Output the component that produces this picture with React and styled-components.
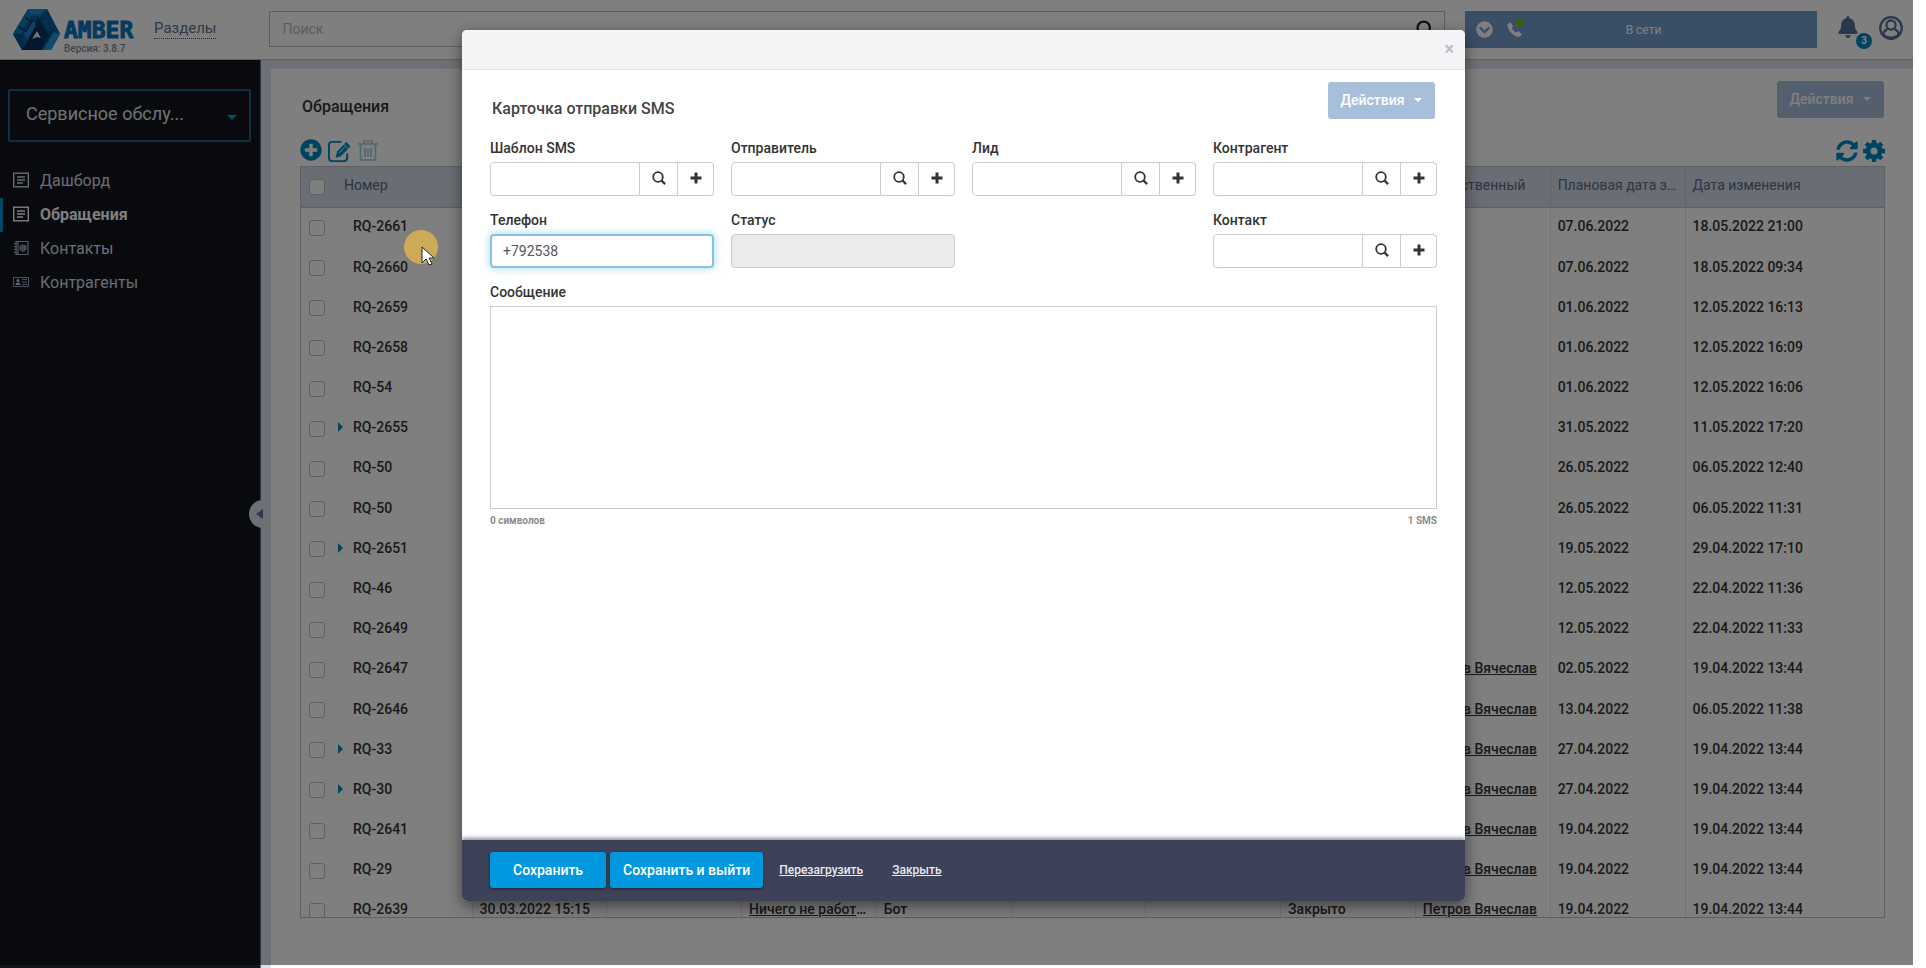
import React from 'react';
import styled, { createGlobalStyle, css } from 'styled-components';
import { FaBell, FaChevronCircleDown, FaPlusCircle, FaSyncAlt } from 'react-icons/fa';

const GlobalStyle = createGlobalStyle`
    * {
        box-sizing: border-box;
    }

    body {
        margin: 0;
        background: #fff;
        font-family: Roboto, "Noto Sans", sans-serif;
        font-size: 14px;
        line-height: 20px;
        color: #333;
    }

    button, input, textarea, select {
        font: inherit;
        color: inherit;
    }

    button {
        cursor: pointer;
    }
`;

const Page = styled.div`
    position: relative;
    display: flex;
    flex-direction: column;
    height: 100vh;
    overflow: hidden;
    padding-right: 13px;
`;

/* ---------- header ---------- */

const Header = styled.header`
    flex: none;
    display: flex;
    align-items: flex-start;
    height: 60px;
    padding: 11px 10px 0 13px;
    border-bottom: 1px solid #c3c5c9;
`;

const Brand = styled.div`
    display: flex;
    width: 141px;
    margin-top: -2px;

    svg {
        width: 47px;
        height: 41px;
    }
`;

const BrandText = styled.div`
    display: flex;
    flex-direction: column;
    padding: 12px 0 0 4px;

    strong {
        font-family: "DejaVu Sans Mono", monospace;
        font-size: 23px;
        line-height: 18px;
        color: #0b74bd;
        -webkit-text-stroke: 1px #0b74bd;
    }

    small {
        margin-top: 4px;
        font-size: 10px;
        font-weight: 500;
        line-height: 12px;
        color: #7c8798;
    }
`;

const SectionsLink = styled.a`
    margin: 7px 53px 0 0;
    border-bottom: 1px dotted #43618a;
    font-size: 15px;
    line-height: 20px;
    color: #5d7396;
    text-decoration: none;
`;

const SearchBox = styled.label`
    flex: 1;
    display: flex;
    align-items: center;
    height: 36px;
    padding: 0 10px 0 12px;
    border: 1px solid #b4bccb;

    input {
        flex: 1;
        padding: 0;
        border: 0;
        outline: 0;
        background: none;

        &::placeholder {
            color: #b5b8bd;
            opacity: 1;
        }
    }

    svg {
        width: 18px;
        height: 18px;
        color: #222;
    }
`;

const PhoneBar = styled.div`
    display: flex;
    align-items: center;
    width: 352px;
    height: 37px;
    margin: 0 20px;
    padding: 0 11px;
    background: #749dcb;
    color: #fff;

    svg {
        width: 17px;
        height: 17px;
    }

    span {
        flex: 1;
        padding-right: 42px;
        font-size: 12px;
        text-align: center;
    }
`;

const PhoneState = styled.div`
    position: relative;
    display: flex;
    margin-left: 13px;

    &::after {
        content: '';
        position: absolute;
        top: -2px;
        right: -1px;
        width: 8px;
        height: 7px;
        border-radius: 2px;
        background: #6fc800;
    }
`;

const IconButton = styled.button`
    position: relative;
    display: flex;
    padding: 0;
    border: 0;
    background: none;
    color: ${({ $color }) => $color || '#0086c0'};
    opacity: ${({ $faded }) => ($faded ? 0.4 : 1)};

    svg {
        width: ${({ $size }) => $size || 22}px;
        height: ${({ $size }) => $size || 22}px;
    }
`;

const UserTools = styled.div`
    display: flex;
    gap: 20px;
    padding: 5px 0 0;
`;

const Badge = styled.span`
    position: absolute;
    top: 17px;
    left: 19px;
    width: 16px;
    height: 16px;
    border-radius: 50%;
    background: #0086c0;
    font-size: 10px;
    font-weight: 700;
    line-height: 16px;
    color: #fff;
    text-align: center;
`;

/* ---------- sidebar ---------- */

const Columns = styled.div`
    flex: 1;
    display: flex;
    min-height: 0;
`;

const Sidebar = styled.aside`
    position: relative;
    flex: none;
    width: 261px;
    padding-top: 29px;
    border-right: 1px solid #4a7396;
    background: #11141c;
`;

const Workspace = styled.button`
    display: flex;
    align-items: center;
    justify-content: space-between;
    width: 243px;
    height: 53px;
    margin: 0 0 22px 8px;
    padding: 0 12px 4px 16px;
    border: 2px solid #1e5f88;
    border-radius: 2px;
    background: none;
    font-size: 18px;
    color: #e0e3e8;

    svg {
        width: 10px;
        height: 5px;
        margin-top: 7px;
        color: #209cc8;
    }
`;

const NavItem = styled.a`
    display: flex;
    align-items: center;
    gap: 11px;
    height: 34px;
    padding-left: 10px;
    border-left: 3px solid transparent;
    font-size: 16px;
    color: #d5dae2;
    text-decoration: none;

    ${({ $active }) =>
        $active &&
        css`
            border-color: #0093d5;
            font-weight: 700;
            color: #fff;
        `}

    svg {
        width: 16px;
        height: 16px;
        margin-bottom: 2px;
    }
`;

const Collapse = styled.button`
    position: absolute;
    top: 440px;
    right: -3px;
    display: flex;
    align-items: center;
    justify-content: flex-end;
    width: 14px;
    height: 28px;
    padding: 0;
    border: 0;
    border-radius: 14px 0 0 14px;
    background: #d8dfea;

    svg {
        width: 7px;
        height: 10px;
    }
`;

/* ---------- list ---------- */

const Main = styled.main`
    flex: 1;
    min-width: 0;
    padding: 9px 0 0 10px;
    background: #dbe1eb;
`;

const Card = styled.section`
    height: 100%;
    padding: 12px 28px 0 29px;
    background: #fff;
`;

const CardTop = styled.div`
    display: flex;
    align-items: flex-start;
    justify-content: space-between;
    padding: 0 1px 0 2px;

    h1 {
        margin: 16px 0 0;
        font-size: 16px;
        font-weight: 500;
        line-height: 20px;
        color: #333;
    }
`;

const ActionButton = styled.button`
    display: flex;
    align-items: center;
    justify-content: center;
    gap: 10px;
    width: 107px;
    height: 37px;
    padding: 0 0 2px;
    border: 0;
    border-radius: 3px;
    background: #a7bfda;
    font-weight: 500;
    color: #fff;

    svg {
        width: 8px;
        height: 4px;
    }
`;

const Toolbar = styled.div`
    display: flex;
    align-items: center;
    justify-content: space-between;
    height: 48px;
    padding-top: 18px;

    div {
        display: flex;
        gap: 5px;
    }
`;

const TableFrame = styled.div`
    height: 752px;
    overflow: hidden;
    border: 1px solid #b9c2d0;
`;

const Table = styled.table`
    width: 100%;
    height: 764px;
    border-collapse: collapse;
    table-layout: fixed;

    th, td {
        padding: 0 7px 3px;
        overflow: hidden;
        border-right: 1px solid #e4e6ea;
        text-align: left;
        text-overflow: ellipsis;
        white-space: nowrap;
    }

    tr > :nth-child(1) {
        width: 36px;
        padding: 0 0 0 8px;
        border-right: 0;
    }

    tr > :nth-child(2) {
        width: 135px;
    }

    tr > :last-child {
        width: 199px;
        border-right: 0;
    }

    th {
        height: 40px;
        border-right-color: #bfc9d8;
        border-bottom: 1px solid #b5c0d0;
        background: #d4dce8;
        font-weight: 400;
        color: #566a8b;
    }

    td {
        font-weight: 500;
        color: #333;
    }

    td:nth-child(2) {
        padding-left: 1px;
    }

    a {
        color: inherit;
    }
`;

const Tick = styled.input`
    appearance: none;
    display: block;
    width: 16px;
    height: 16px;
    margin: 0;
    border: 1px solid #c0c0c0;
    border-radius: 3px;
    background: #fff;
`;

const Number = styled.span`
    display: flex;
    align-items: center;
    gap: 10px;

    svg {
        flex: none;
        width: 5px;
        height: 10px;
    }
`;

/* ---------- modal ---------- */

const Overlay = styled.div`
    position: absolute;
    inset: 0 13px 3px 0;
    padding: 30px 448px 0 462px;
    background: rgba(0, 0, 0, 0.5);
`;

const Modal = styled.div`
    display: flex;
    flex-direction: column;
    height: 871px;
    overflow: hidden;
    border-radius: 5px;
    background: #fff;
    box-shadow: 0 5px 15px rgba(0, 0, 0, 0.5);
`;

const ModalHeader = styled.div`
    flex: none;
    display: flex;
    align-items: center;
    justify-content: flex-end;
    height: 40px;
    padding: 0 11px 2px;
    border-bottom: 1px solid #e3e5e8;
    background: #f3f4f6;

    button {
        padding: 0;
        border: 0;
        background: none;
        font-size: 18px;
        font-weight: 700;
        color: #bfc0c2;
    }
`;

const Form = styled.form`
    flex: 1;
    padding: 12px 28px 0;
`;

const FormTop = styled.div`
    display: flex;
    align-items: flex-start;
    justify-content: space-between;
    padding: 0 2px;

    h2 {
        margin: 17px 0 0;
        font-size: 16px;
        font-weight: 500;
        line-height: 20px;
        color: #444;
    }
`;

const Fields = styled.div`
    display: grid;
    grid-template-columns: repeat(4, 1fr);
    gap: 14px 17px;
    margin-top: 19px;
`;

const Field = styled.div`
    grid-column: ${({ $column }) => $column || 'auto'};

    label {
        display: block;
        margin-bottom: 4px;
        font-weight: 500;
        line-height: 20px;
        color: #333;
    }
`;

const TextInput = styled.input`
    display: block;
    width: 100%;
    min-width: 0;
    height: 34px;
    padding: 0 12px;
    border: 1px solid #ccc;
    border-radius: 4px;
    outline: 0;
    background: #fff;
    color: #555;

    &:disabled {
        background: #ebebeb;
    }

    ${({ $active }) =>
        $active &&
        css`
            padding: 0 11px;
            border: 2px solid #85c3da;
            box-shadow: 0 0 8px rgba(90, 190, 235, 0.6);
        `}
`;

const InputGroup = styled.div`
    display: flex;

    ${TextInput} {
        flex: 1;
        border-radius: 4px 0 0 4px;
    }
`;

const GroupButton = styled.button`
    display: flex;
    align-items: center;
    justify-content: center;
    width: ${({ $width }) => $width}px;
    height: 34px;
    padding: 0 0 2px;
    border: 1px solid #ccc;
    border-left: 0;
    background: #fff;
    color: #333;

    &:last-child {
        border-radius: 0 4px 4px 0;
    }

    svg {
        width: 14px;
        height: 14px;
    }
`;

const Message = styled.textarea`
    display: block;
    width: 100%;
    height: 203px;
    padding: 6px 12px;
    border: 1px solid #ccc;
    outline: 0;
    resize: none;
`;

const Counter = styled.div`
    display: flex;
    justify-content: space-between;
    margin-top: 5px;
    font-size: 10px;
    font-weight: 700;
    line-height: 14px;
    color: #8c8c8c;
`;

const ModalFooter = styled.div`
    z-index: 1;
    flex: none;
    display: flex;
    align-items: center;
    height: 61px;
    padding: 0 28px 2px;
    background: #3e4259;
    box-shadow: 0 -2px 4px rgba(62, 66, 89, 0.6);

    a {
        margin-left: 16px;
        font-size: 12px;
        font-weight: 500;
        color: #e9eaf0;
    }

    a + a {
        margin-left: 29px;
    }
`;

const SaveButton = styled.button`
    height: 36px;
    margin-right: 4px;
    padding: 0 ${({ $wide }) => ($wide ? 23 : 13)}px;
    border: 0;
    border-radius: 3px;
    background: #0099df;
    box-shadow: 0 1px 3px rgba(0, 0, 0, 0.5);
    font-weight: 500;
    color: #fff;

    & + & {
        margin-right: 0;
    }
`;

/* ---------- pointer ---------- */

const Pointer = styled.svg`
    position: absolute;
    top: 229px;
    left: 403px;
    width: 36px;
    height: 40px;
`;

/* ---------- icons ---------- */

const Logo = () => (
    <svg viewBox="0 0 47 41">
        <path d="M15 0h19l13 25-9 16H9L0 25z" fill="#0c5e9f" />
        <path d="M15 0h19l-2 6-14 1L6 28l-6-3z" fill="#1579b8" />
        <path d="M15 0h19l-2 5H17z" fill="#1b8fd2" />
        <path d="M34 0l13 25-6 2L28 5z" fill="#0e5a97" />
        <path d="M47 25l-9 16h-8l11-18z" fill="#1f96dc" />
        <path d="M0 25l6 2 9 14H9z" fill="#0b5290" />
        <path d="M9 41l6-9h18l-5 9z" fill="#0a2f5c" />
        <path d="M18 12h5v7l-8 13-4-7z" fill="#1b86c8" />
        <path d="M25 8l12 20-5 3-10-16z" fill="#0a3461" />
        <path d="M23 16l9 16H14z" fill="#0a2c54" />
        <path d="M24 22l4 7-4-1-5 2z" fill="#d6ebfa" />
        <path
            d="M12 8l5 4h9M6 18l7 4 6-9M3 25l7 3M20 36l7-5h8M31 10l-5 1M38 22l-7 11"
            fill="none"
            stroke="#083c6c"
            strokeWidth="1.5"
        />
    </svg>
);

const Caret = () => (
    <svg viewBox="0 0 10 5"><path d="M0 0h10L5 5z" fill="currentColor" /></svg>
);

const SearchIcon = () => (
    <svg viewBox="0 0 14 14" fill="none" stroke="currentColor">
        <circle cx="6" cy="6" r="4.8" strokeWidth="1.8" />
        <path d="M9.5 9.5l3.6 3.6" strokeWidth="2.2" />
    </svg>
);

const PlusIcon = () => (
    <svg viewBox="0 0 14 14"><path d="M7 1.5v11M1.5 7h11" stroke="currentColor" strokeWidth="3" /></svg>
);

const HandsetIcon = () => (
    <svg viewBox="0 0 17 17">
        <path
            d="M4.5 1.5L1.5 3c-.8 5.5 6 13 11.500 13l3-2.500-3.500-3.500-2.500 1.500c-2-1-3.500-2.700-4.200-4.700L7 5z"
            fill="currentColor"
        />
    </svg>
);

const UserIcon = () => (
    <svg viewBox="0 0 24 24" fill="none" stroke="currentColor">
        <circle cx="12" cy="12" r="10.8" strokeWidth="2.2" />
        <circle cx="12" cy="9" r="4.6" strokeWidth="2.2" />
        <path d="M8.5 13c-1.500 1.500-4 1-4.300 5.500M15.500 13c1.500 1.500 4 1 4.300 5.500M4 18c4 5 12 5 16 0" strokeWidth="2.4" />
    </svg>
);

const EditIcon = () => (
    <svg viewBox="0 0 26 26" fill="none" stroke="currentColor">
        <path d="M15 3H5.500Q2 3 2 6.500v13Q2 23 5.500 23h12q3.500 0 3.500-3.500V15" strokeWidth="2" />
        <path d="M20 3l4.500 4.500L14.500 18 9 19.500 10.500 13z" fill="currentColor" stroke="none" />
        <path d="M17.500 5.500l4.500 4.500" stroke="#fff" />
        <path d="M12.500 14.500l6-6" stroke="#fff" />
    </svg>
);

const TrashIcon = () => (
    <svg viewBox="0 0 22 22" fill="none" stroke="currentColor" strokeWidth="1.6">
        <path d="M1 5h20M7 5V2h8v3M3.500 5v16h15V5M8 9v9M11 9v9M14 9v9" />
    </svg>
);

const CogIcon = () => (
    <svg viewBox="0 0 22 22" stroke="currentColor" fill="none">
        <circle cx="11" cy="11" r="6" strokeWidth="5" />
        <path d="M11 0v4M11 18v4M0 11h4M18 11h4M3.200 3.200l3 3M15.800 15.800l3 3M18.800 3.200l-3 3M6.200 15.800l-3 3" strokeWidth="4.4" />
    </svg>
);

const ListIcon = () => (
    <svg viewBox="0 0 16 16" fill="none" stroke="currentColor" strokeWidth="1.4">
        <rect x="0.7" y="1.2" width="14.6" height="13.6" />
        <path d="M4 5h8M4 8h8M4 11h6" />
    </svg>
);

const BookIcon = () => (
    <svg viewBox="0 0 16 16" fill="none" stroke="#a7b2c7" strokeWidth="1.2">
        <path d="M3 1.5h12v13H3z M1 3.5h3M1 6.5h3M1 9.5h3M1 12.5h3M5 2v12" />
        <circle cx="10" cy="8" r="1.3" />
        <path d="M11.4 6.5v2.600c1 .6 1.800-.3 1.700-1.500-.3-3.500-5.800-3.500-6 .3 0 3 3 3.800 5 2.600" />
    </svg>
);

const CardIcon = () => (
    <svg viewBox="0 0 16 16">
        <path d="M.5 3.500h15v9H.5z" fill="none" stroke="#97a3ba" />
        <circle cx="5" cy="6.5" r="1.5" fill="#c2cbdb" />
        <path d="M2.500 11c0-3.500 5-3.500 5 0z" fill="#c2cbdb" />
        <path d="M9 5.500h5M9 8h5M9 10.500h5" stroke="#97a3ba" />
    </svg>
);

const nav = [
    { name: 'Дашборд', Icon: ListIcon },
    { name: 'Обращения', Icon: ListIcon, active: true },
    { name: 'Контакты', Icon: BookIcon },
    { name: 'Контрагенты', Icon: CardIcon },
];

const headings = ['Номер', '', '', '', '', '', '', '', 'Ответственный', 'Плановая дата завершения', 'Дата изменения'];

const owner = 'Петров Вячеслав';

const rows = [
    { id: 'RQ-2661', due: '07.06.2022', changed: '18.05.2022 21:00' },
    { id: 'RQ-2660', due: '07.06.2022', changed: '18.05.2022 09:34' },
    { id: 'RQ-2659', due: '01.06.2022', changed: '12.05.2022 16:13' },
    { id: 'RQ-2658', due: '01.06.2022', changed: '12.05.2022 16:09' },
    { id: 'RQ-54', due: '01.06.2022', changed: '12.05.2022 16:06' },
    { id: 'RQ-2655', due: '31.05.2022', changed: '11.05.2022 17:20', nested: true },
    { id: 'RQ-50', due: '26.05.2022', changed: '06.05.2022 12:40' },
    { id: 'RQ-50', due: '26.05.2022', changed: '06.05.2022 11:31' },
    { id: 'RQ-2651', due: '19.05.2022', changed: '29.04.2022 17:10', nested: true },
    { id: 'RQ-46', due: '12.05.2022', changed: '22.04.2022 11:36' },
    { id: 'RQ-2649', due: '12.05.2022', changed: '22.04.2022 11:33' },
    { id: 'RQ-2647', owner, due: '02.05.2022', changed: '19.04.2022 13:44' },
    { id: 'RQ-2646', owner, due: '13.04.2022', changed: '06.05.2022 11:38' },
    { id: 'RQ-33', owner, due: '27.04.2022', changed: '19.04.2022 13:44', nested: true },
    { id: 'RQ-30', owner, due: '27.04.2022', changed: '19.04.2022 13:44', nested: true },
    { id: 'RQ-2641', owner, due: '19.04.2022', changed: '19.04.2022 13:44' },
    { id: 'RQ-29', owner, due: '19.04.2022', changed: '19.04.2022 13:44' },
    {
        id: 'RQ-2639',
        created: '30.03.2022 15:15',
        subject: 'Ничего не работает',
        source: 'Бот',
        status: 'Закрыто',
        owner,
        due: '19.04.2022',
        changed: '19.04.2022 13:44',
    },
];

const Actions = () => (
    <ActionButton type="button">
        Действия
        <Caret />
    </ActionButton>
);

const Lookup = ({ id, label, column }) => (
    <Field $column={column}>
        <label htmlFor={id}>{label}</label>
        <InputGroup>
            <TextInput id={id} />
            <GroupButton type="button" $width={38} aria-label="Найти"><SearchIcon /></GroupButton>
            <GroupButton type="button" $width={36} aria-label="Добавить"><PlusIcon /></GroupButton>
        </InputGroup>
    </Field>
);

const TopBar = () => (
    <Header>
        <Brand>
            <Logo />
            <BrandText>
                <strong>AMBER</strong>
                <small>Версия: 3.8.7</small>
            </BrandText>
        </Brand>
        <SectionsLink href="#sections">Разделы</SectionsLink>
        <SearchBox>
            <input type="text" placeholder="Поиск" aria-label="Поиск" />
            <SearchIcon />
        </SearchBox>
        <PhoneBar>
            <FaChevronCircleDown />
            <PhoneState><HandsetIcon /></PhoneState>
            <span>В сети</span>
        </PhoneBar>
        <UserTools>
            <IconButton $color="#566f95" aria-label="Уведомления">
                <FaBell />
                <Badge>3</Badge>
            </IconButton>
            <IconButton $color="#566f95" $size={24} aria-label="Профиль"><UserIcon /></IconButton>
        </UserTools>
    </Header>
);

const SideMenu = () => (
    <Sidebar>
        <Workspace>
            Сервисное обслу...
            <Caret />
        </Workspace>
        <nav>
            {nav.map(({ name, Icon, active }) => (
                <NavItem key={name} href="#list" $active={active}>
                    <Icon />
                    {name}
                </NavItem>
            ))}
        </nav>
        <Collapse aria-label="Свернуть меню">
            <svg viewBox="0 0 7 10"><path d="M7 0v10L0 5z" fill="#5a6f9c" /></svg>
        </Collapse>
    </Sidebar>
);

const RequestTable = () => (
    <TableFrame>
        <Table>
            <thead>
                <tr>
                    <th><Tick type="checkbox" aria-label="Выбрать все" /></th>
                    {headings.map((name, i) => <th key={i}>{name}</th>)}
                </tr>
            </thead>
            <tbody>
                {rows.map((row, i) => (
                    <tr key={i}>
                        <td><Tick type="checkbox" aria-label={row.id} /></td>
                        <td>
                            <Number>
                                <svg viewBox="0 0 5 10">
                                    {row.nested && <path d="M0 0v10l5-5z" fill="#0086c0" />}
                                </svg>
                                {row.id}
                            </Number>
                        </td>
                        <td>{row.created}</td>
                        <td />
                        <td>{row.subject && <a href="#subject">{row.subject}</a>}</td>
                        <td>{row.source}</td>
                        <td />
                        <td />
                        <td>{row.status}</td>
                        <td>{row.owner && <a href="#owner">{row.owner}</a>}</td>
                        <td>{row.due}</td>
                        <td>{row.changed}</td>
                    </tr>
                ))}
            </tbody>
        </Table>
    </TableFrame>
);

const SmsModal = () => (
    <Modal role="dialog" aria-label="Карточка отправки SMS">
        <ModalHeader>
            <button type="button" aria-label="Закрыть окно">×</button>
        </ModalHeader>
        <Form>
            <FormTop>
                <h2>Карточка отправки SMS</h2>
                <Actions />
            </FormTop>
            <Fields>
                <Lookup id="template" label="Шаблон SMS" />
                <Lookup id="sender" label="Отправитель" />
                <Lookup id="lead" label="Лид" />
                <Lookup id="company" label="Контрагент" />
                <Field>
                    <label htmlFor="phone">Телефон</label>
                    <TextInput id="phone" type="tel" defaultValue="+792538" $active />
                </Field>
                <Field>
                    <label htmlFor="status">Статус</label>
                    <TextInput id="status" disabled />
                </Field>
                <Lookup id="contact" label="Контакт" column={4} />
                <Field $column="1 / -1">
                    <label htmlFor="message">Сообщение</label>
                    <Message id="message" />
                    <Counter>
                        <span>0 символов</span>
                        <span>1 SMS</span>
                    </Counter>
                </Field>
            </Fields>
        </Form>
        <ModalFooter>
            <SaveButton type="button" $wide>Сохранить</SaveButton>
            <SaveButton type="button">Сохранить и выйти</SaveButton>
            <a href="#reload">Перезагрузить</a>
            <a href="#close">Закрыть</a>
        </ModalFooter>
    </Modal>
);

const App = () => (
    <Page>
        <GlobalStyle />
        <TopBar />
        <Columns>
            <SideMenu />
            <Main>
                <Card>
                    <CardTop>
                        <h1>Обращения</h1>
                        <Actions />
                    </CardTop>
                    <Toolbar>
                        <div>
                            <IconButton aria-label="Создать"><FaPlusCircle /></IconButton>
                            <IconButton aria-label="Изменить" $size={25}><EditIcon /></IconButton>
                            <IconButton aria-label="Удалить" $faded><TrashIcon /></IconButton>
                        </div>
                        <div>
                            <IconButton aria-label="Обновить"><FaSyncAlt /></IconButton>
                            <IconButton aria-label="Настройки"><CogIcon /></IconButton>
                        </div>
                    </Toolbar>
                    <RequestTable />
                </Card>
            </Main>
        </Columns>
        <Overlay>
            <SmsModal />
        </Overlay>
        <Pointer viewBox="0 0 36 40">
            <circle cx="18" cy="18" r="17" fill="#cdaa55" />
            <path d="M19 18v16l4-4 3 6 3-1-3-6h5z" fill="#fff" stroke="#222" />
        </Pointer>
    </Page>
);

export default App;
